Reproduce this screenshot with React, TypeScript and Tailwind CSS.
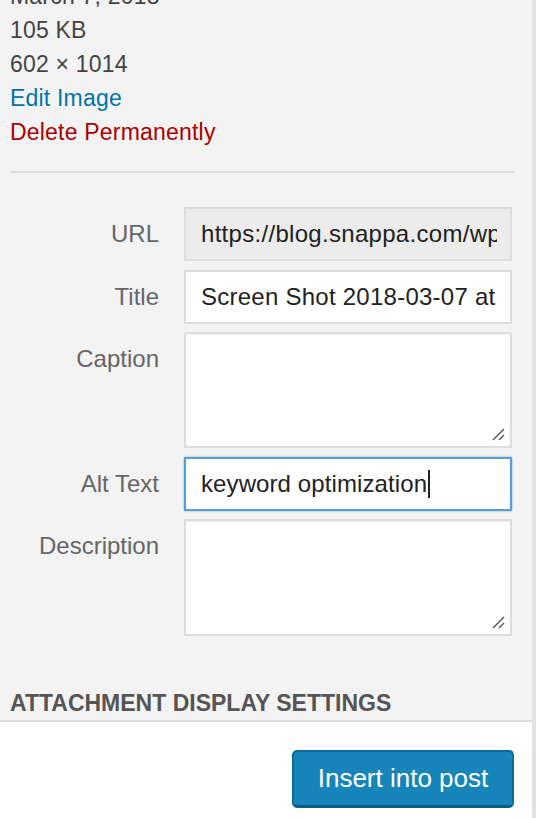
import React from "react";

function Resize() {
  return (
    <svg className="absolute right-[5px] bottom-[5px]" width="14" height="14" viewBox="0 0 14 14">
      <line x1="2" y1="13" x2="13" y2="2" stroke="#555" strokeWidth="1.4" />
      <line x1="8" y1="13" x2="13" y2="8" stroke="#555" strokeWidth="1.4" />
    </svg>
  );
}

function Row({ label, children }: { label: string; children: React.ReactNode }) {
  return (
    <div className="flex items-start">
      <div className="w-[159px] shrink-0 text-right text-[24px] leading-[54px] text-[#666]">{label}</div>
      <div className="ml-[25px] w-[328px] shrink-0">{children}</div>
    </div>
  );
}

export default function App() {
  return (
    <div
      className="w-[536px] h-[818px] flex overflow-hidden bg-white"
      style={{ fontFamily: '"Liberation Sans", Arial, sans-serif' }}
    >
      <div className="flex-1 flex flex-col">
        <div className="bg-[#f3f3f3] border-b-2 border-[#dddddd] h-[722px] flex flex-col">
          <div className="pl-[10px] mt-[-21px] text-[23px] leading-[34px] text-[#444] tracking-[0.2px]">
            <div>March 7, 2018</div>
            <div>105 KB</div>
            <div>602 × 1014</div>
            <div className="text-[#0073aa]">Edit Image</div>
            <div className="text-[#aa0000]">Delete Permanently</div>
          </div>
          <div className="mt-[22px] ml-[10px] mr-[18px] h-[2px] bg-[#dddddd]" />
          <div className="mt-[34px] flex flex-col gap-[8.6px]">
            <Row label="URL">
              <div className="h-[54px] border-2 border-[#dddddd] bg-[#ececec] pl-[15px] pr-[13px] flex items-center overflow-hidden whitespace-nowrap text-[24px] tracking-[0.3px] text-[#222]">
                <span className="overflow-hidden">https://blog.snappa.com/wp-content/uploads</span>
              </div>
            </Row>
            <Row label="Title">
              <div className="h-[54px] border-2 border-[#dddddd] bg-white pl-[15px] pr-[13px] flex items-center overflow-hidden whitespace-nowrap text-[24px] tracking-[0.25px] text-[#222]">
                <span className="overflow-hidden">Screen Shot 2018-03-07 at 3.12.45 PM</span>
              </div>
            </Row>
            <Row label="Caption">
              <div className="relative h-[116px] border-2 border-[#dddddd] bg-white shadow-[inset_0_1px_2px_rgba(0,0,0,0.07)]">
                <Resize />
              </div>
            </Row>
            <Row label="Alt Text">
              <div className="h-[54px] border-2 border-[#5b9dd9] bg-white pl-[15px] flex items-center overflow-hidden whitespace-nowrap text-[24px] tracking-[0.1px] text-[#222] shadow-[0_0_2px_rgba(30,140,190,0.6)]">
                <span>keyword optimization</span>
                <span className="ml-[1px] inline-block w-[2px] h-[28px] bg-[#222]" />
              </div>
            </Row>
            <Row label="Description">
              <div className="relative h-[117px] border-2 border-[#dddddd] bg-white shadow-[inset_0_1px_2px_rgba(0,0,0,0.07)]">
                <Resize />
              </div>
            </Row>
          </div>
          <div className="mt-[52px] pl-[10px] text-[23px] leading-[30px] font-bold text-[#555]">
            ATTACHMENT DISPLAY SETTINGS
          </div>
        </div>
        <div className="flex justify-end pt-[28px] pr-[18px]">
          <button className="w-[222px] h-[58px] rounded-[5px] bg-[#1685ba] border-2 border-[#0a6a9a] border-b-[3px] border-b-[#0a5f8a] text-white text-[26px]">
            Insert into post
          </button>
        </div>
      </div>
      <div className="w-[4px] bg-[#e2e2e2]" />
    </div>
  );
}
